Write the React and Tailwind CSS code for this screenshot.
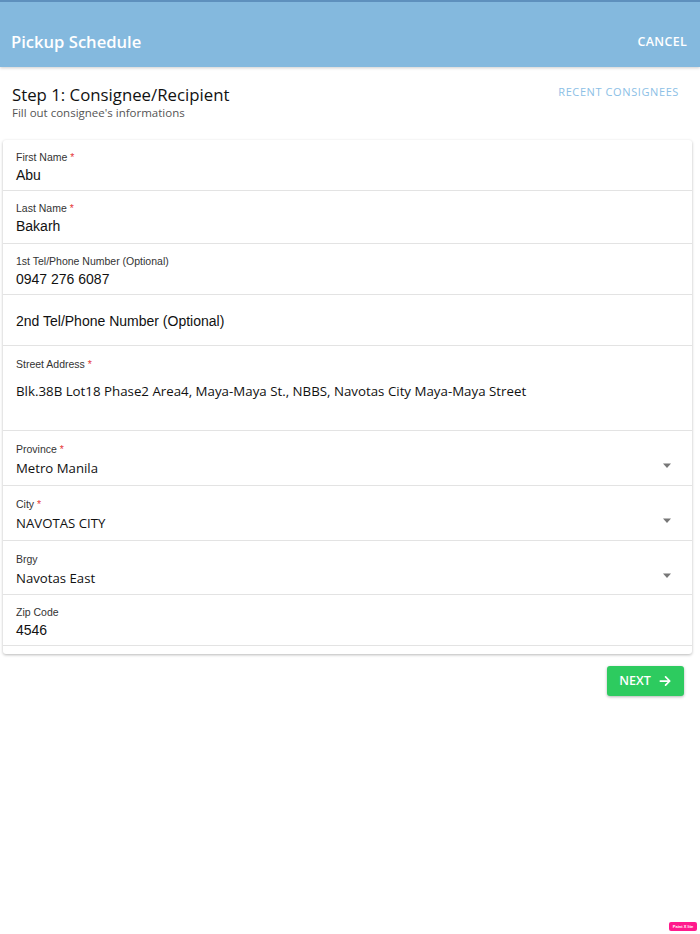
import React from "react";

const sans = { fontFamily: '"Liberation Sans", Arial, sans-serif' };

const Label = ({ children, required }) => (
  <div className="text-[10.5px] leading-[13px] text-[#333]" style={sans}>
    {children}
    {required && <span className="text-[#e5383b]"> *</span>}
  </div>
);

const Caret = () => (
  <svg width="10" height="6" viewBox="0 0 10 6" className="absolute right-[20px] top-[32px]">
    <path d="M1 0.5h8L5 5z" fill="#777" />
  </svg>
);

const TextRow = ({ label, value, required, h = "h-[51px]" }) => (
  <div className={`${h} border-b border-[#e3e3e3] px-[13px] pt-[11px]`}>
    <Label required={required}>{label}</Label>
    <div className="mt-[2px] text-[14px] leading-[18px] text-[#111]" style={sans}>
      {value}
    </div>
  </div>
);

const SelectRow = ({ label, value, required, h = "h-[55px]" }) => (
  <div className={`relative ${h} border-b border-[#e3e3e3] px-[13px] pt-[12px]`}>
    <Label required={required}>{label}</Label>
    <div className="mt-[3px] text-[13.2px] leading-[18px] text-[#111] font-['Open_Sans',sans-serif]">
      {value}
    </div>
    <Caret />
  </div>
);

export default function App() {
  return (
    <div className="relative min-h-[934px] bg-white font-['Open_Sans',sans-serif]">
      <header className="h-[67px] border-t-2 border-[#5e90bd] bg-[#84b9de] flex items-center justify-between pt-[16px] pl-[11px] pr-[13px] shadow-[0_1px_3px_rgba(0,0,0,0.2)]">
        <h1 className="text-[16.6px] font-semibold text-white">Pickup Schedule</h1>
        <button className="text-[12.5px] font-semibold text-white tracking-[0.3px]">CANCEL</button>
      </header>

      <div className="flex justify-between pl-[12px] pr-[21px] h-[73px] pt-[17px]">
        <div>
          <div className="text-[16.8px] leading-[22px] text-[#111]">Step 1: Consignee/Recipient</div>
          <div className="text-[11.5px] leading-[14px] text-[#555]">Fill out consignee's informations</div>
        </div>
        <button className="self-start mt-[0px] text-[11px] font-medium tracking-[0.6px] text-[#8cc0e6]">
          RECENT CONSIGNEES
        </button>
      </div>

      <div className="ml-[3px] mr-[8px] rounded-[3px] bg-white shadow-[0_1px_3px_rgba(0,0,0,0.28)] pb-[8px]">
        <TextRow label="First Name" value="Abu" required />
        <TextRow label="Last Name" value="Bakarh" required h="h-[53px]" />
        <TextRow label="1st Tel/Phone Number (Optional)" value="0947 276 6087" />
        <div className="h-[51px] border-b border-[#e3e3e3] px-[13px] pt-[2px] flex items-center">
          <div className="text-[14px] text-[#111]" style={sans}>2nd Tel/Phone Number (Optional)</div>
        </div>
        <div className="h-[85px] border-b border-[#e3e3e3] px-[13px] pt-[12px]">
          <Label required>Street Address</Label>
          <div className="mt-[11px] text-[13.3px] leading-[18px] text-[#111]">
            Blk.38B Lot18 Phase2 Area4, Maya-Maya St., NBBS, Navotas City Maya-Maya Street
          </div>
        </div>
        <SelectRow label="Province" value="Metro Manila" required />
        <SelectRow label="City" value="NAVOTAS CITY" required />
        <SelectRow label="Brgy" value="Navotas East" h="h-[54px]" />
        <TextRow label="Zip Code" value="4546" />
      </div>

      <div className="flex justify-end mr-[16px] mt-[12px]">
        <button className="h-[30px] w-[77px] rounded-[3px] bg-[#2dcb5f] shadow-[0_1px_3px_rgba(0,0,0,0.3)] flex items-center justify-center gap-[7px] text-[12.5px] font-semibold text-white">
          NEXT
          <svg width="14" height="14" viewBox="0 0 24 24" fill="none" stroke="white" strokeWidth="3" strokeLinecap="round" strokeLinejoin="round">
            <path d="M4 12h16M13 5l7 7-7 7" />
          </svg>
        </button>
      </div>

      <div className="absolute left-[669px] top-[922px] h-[9px] w-[28px] rounded-[2px] bg-[#ff1a8c] flex items-center justify-center">
        <span className="text-[4px] leading-none font-bold text-white" style={sans}>Paint X lite</span>
      </div>
    </div>
  );
}
